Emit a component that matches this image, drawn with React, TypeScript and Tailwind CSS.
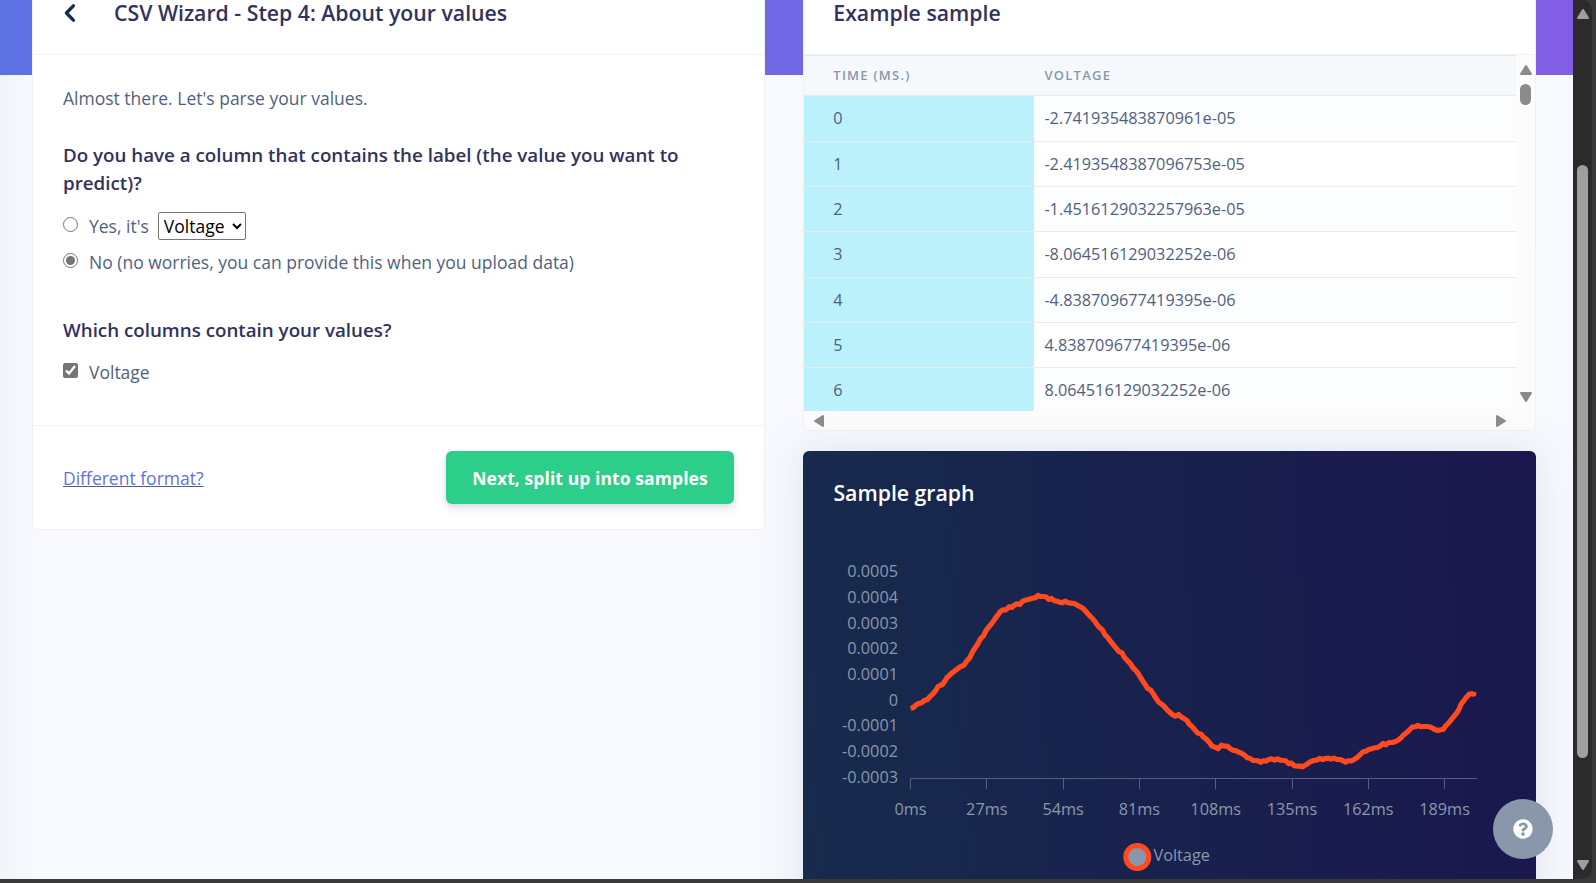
import { FaQuestionCircle } from "react-icons/fa";

const samples = [
  "-2.741935483870961e-05",
  "-2.4193548387096753e-05",
  "-1.4516129032257963e-05",
  "-8.064516129032252e-06",
  "-4.838709677419395e-06",
  "4.838709677419395e-06",
  "8.064516129032252e-06",
];

const yLabels: [string, number][] = [
  ["0.0005", 577],
  ["0.0004", 603],
  ["0.0003", 629],
  ["0.0002", 654],
  ["0.0001", 680],
  ["0", 706],
  ["-0.0001", 731],
  ["-0.0002", 757],
  ["-0.0003", 783],
];
const xLabels = ["0ms", "27ms", "54ms", "81ms", "108ms", "135ms", "162ms", "189ms"];

const linePoints =
  "274,506 282,503 292,494 299,491 307,489 315,482 324,479 332,470 341,462 349,452 356,440 362,437 368,435 375,426 383,413 392,405 400,398 409,391 418,384 427,379 434,376 441,365 451,354 459,337 467,324 475,313 483,297 493,287 500,272 509,260 518,250 526,238 535,226 543,215 551,210 558,211 564,206 569,201 577,203 584,197 592,192 602,194 609,185 618,181 626,179 634,177 641,175 648,174 655,167 662,170 671,170 680,171 688,179 696,176 704,182 712,184 720,187 729,189 738,184 746,189 755,190 765,191 774,197 783,201 791,206 800,216 809,226 819,236 826,244 833,255 841,264 849,270 856,284 865,293 873,304 882,315 890,325 898,335 908,339 915,353 924,362 933,372 941,384 951,394 959,405 968,420 977,434 985,446 993,450 1001,461 1009,474 1017,486 1026,493 1034,499 1043,510 1052,518 1060,525 1068,529 1078,524 1086,532 1095,537 1103,543 1111,555 1119,561 1127,571 1135,580 1145,583 1153,593 1162,599 1170,608 1178,619 1187,622 1196,627 1206,616 1215,619 1224,619 1232,626 1240,631 1250,633 1258,637 1267,641 1275,646 1284,654 1293,656 1301,662 1310,662 1318,664 1324,668 1331,663 1339,664 1347,660 1356,657 1366,661 1374,657 1383,661 1391,662 1399,663 1408,672 1416,670 1425,678 1433,679 1442,679 1450,681 1458,676 1466,671 1475,665 1483,662 1492,661 1501,656 1510,659 1518,656 1527,655 1535,658 1543,655 1552,659 1561,659 1570,662 1578,667 1586,663 1597,663 1605,659 1614,653 1622,645 1631,636 1640,634 1648,629 1657,627 1665,624 1674,623 1682,619 1691,611 1700,615 1709,608 1718,608 1727,606 1735,602 1744,595 1752,586 1761,579 1770,571 1778,562 1787,561 1796,557 1804,561 1812,560 1821,560 1830,561 1838,564 1846,569 1855,572 1864,570 1872,568 1880,557 1889,548 1897,538 1906,527 1914,517 1920,506 1925,493 1933,483 1942,471 1950,463 1958,462 1963,463 1964,456";

function Arrow({ className }: { className: string }) {
  return (
    <svg viewBox="0 0 12 10" className={className}>
      <path d="M6 1 L11 9 H1 Z" fill="currentColor" stroke="currentColor" strokeWidth="2" strokeLinejoin="round" />
    </svg>
  );
}

function WizardCard() {
  return (
    <section className="h-[530px] w-[733px] shrink-0 rounded-b-md border border-t-0 border-black/5 bg-white">
      <header className="flex h-[55px] items-start border-b border-black/5 pl-[31px]">
        <svg viewBox="0 0 12 20" className="mt-[3px] h-5 w-3" fill="none" stroke="#172b4d" strokeWidth="3.3" strokeLinecap="round" strokeLinejoin="round">
          <path d="M9.4 2.8 L2.4 10 L9.4 17.2" />
        </svg>
        <h1 className="ml-[38px] text-[21.25px] leading-[25.5px] font-semibold text-[#32325d]">
          CSV Wizard - Step 4: About your values
        </h1>
      </header>
      <div className="h-[371px] border-b border-black/5 pt-[28px] pr-[30px] pl-[30px] text-[17.5px] leading-[30px]">
        <p>Almost there. Let's parse your values.</p>
        <h2 className="mt-[28px] text-[18.75px] leading-[28.1px] font-semibold text-[#32325d]">
          Do you have a column that contains the label (the value you want to predict)?
        </h2>
        <div className="mt-[14px] flex h-[30px] items-center">
          <input type="radio" name="label" className="mb-[4px] size-[15px] accent-[#757575]" />
          <span className="ml-[11px]">Yes, it's</span>
          <select className="ml-[9px] h-[28px] w-[88px] rounded-[2px] border border-[#767676] bg-white pl-px leading-[26px] text-black">
            <option>Voltage</option>
          </select>
        </div>
        <div className="mt-[6px] flex h-[30px] items-center">
          <input type="radio" name="label" defaultChecked className="mb-[4px] size-[15px] accent-[#757575]" />
          <span className="ml-[11px]">No (no worries, you can provide this when you upload data)</span>
        </div>
        <h2 className="mt-[39px] text-[18.75px] leading-[28.1px] font-semibold text-[#32325d]">
          Which columns contain your values?
        </h2>
        <div className="mt-[13px] flex h-[30px] items-center">
          <input type="checkbox" defaultChecked className="mb-[3px] size-[15px] accent-[#757575]" />
          <span className="ml-[11px]">Voltage</span>
        </div>
      </div>
      <footer className="flex items-start justify-between px-[30px] pt-[25px]">
        <a className="mt-[12px] text-[17.5px] leading-[30px] text-[#5e72e4] underline decoration-[#525f7f]">Different format?</a>
        <button className="h-[53px] w-[288px] rounded-[6px] bg-[#2dce89] pt-[2px] text-[17.5px] font-bold tracking-[.005em] text-white shadow-[0_5px_8px_rgba(50,50,93,.11),0_1px_4px_rgba(0,0,0,.08)]">
          Next, split up into samples
        </button>
      </footer>
    </section>
  );
}

function SampleCard() {
  return (
    <section className="h-[431px] w-[733px] overflow-hidden rounded-b-md border border-t-0 border-black/5 bg-white">
      <header className="h-[55px] border-b border-black/5 pl-[29.3px] text-[21.25px] leading-[25.5px] font-semibold text-[#32325d]">
        Example sample
      </header>
      <div className="flex">
        <div className="h-[356px] w-[712px] overflow-hidden">
          <div className="flex h-[40.4px] border-t border-[#e9ecef] bg-[#f6f9fc] text-[13px] leading-[38px] font-semibold tracking-[1.25px] text-[#8898aa] uppercase">
            <div className="w-[230px] pl-[29.3px]">Time (ms.)</div>
            <div className="pl-[10.4px]">Voltage</div>
          </div>
          {samples.map((value, i) => (
            <div
              key={value}
              className="flex h-[45.34px] border-t border-[#e9ecef] text-[16.25px] leading-[44.5px] odd:bg-white even:bg-[#fcfdfe]"
            >
              <div className="w-[230px] bg-[#bbf1fb] pl-[29.3px]">{i}</div>
              <div className="pl-[10.4px]">{value}</div>
            </div>
          ))}
        </div>
        <div className="flex h-[356px] w-[19px] flex-col items-center bg-[#fcfcfc] pt-[10px] text-[#8b8b8b]">
          <Arrow className="h-[10px] w-3" />
          <div className="mt-[9px] h-[21px] w-[11px] rounded-full bg-[#8b8b8b]" />
          <Arrow className="mt-[287px] h-[10px] w-3 rotate-180" />
        </div>
      </div>
      <div className="flex h-[19px] items-center justify-between bg-[#fcfcfc] pr-[28px] pl-[9px] text-[#8b8b8b]">
        <Arrow className="h-[10px] w-3 -rotate-90" />
        <Arrow className="h-[10px] w-3 rotate-90" />
      </div>
    </section>
  );
}

function GraphCard() {
  return (
    <section className="relative mt-5 h-[500px] w-[733px] rounded-md bg-[linear-gradient(87deg,#172b4d,#1a174d)] shadow-[0_0_40px_rgba(136,152,170,.22)]">
      <h2 className="h-[89px] pt-[29px] pl-[30.4px] text-[21.25px] leading-[25.5px] font-semibold text-white">Sample graph</h2>
      <svg viewBox="820 540 716 343" className="ml-[17px] h-[343px] w-[716px] text-[16.25px]" fill="#8898aa">
        {yLabels.map(([label, y]) => (
          <text key={label} x="898" y={y} textAnchor="end">
            {label}
          </text>
        ))}
        <path
          d="M910 778.5H1477M910.5 778V789M986.5 778V789M1063.5 778V789M1139.5 778V789M1215.5 778V789M1292.5 778V789M1368.5 778V789M1444.5 778V789"
          fill="none"
          stroke="#525f7f"
        />
        {xLabels.map((label, i) => (
          <text key={label} x={910.5 + i * 76.3} y="815" textAnchor="middle">
            {label}
          </text>
        ))}
        <g transform="translate(819.4 539.8) scale(0.33333)">
          <polyline points={linePoints} fill="none" stroke="#ff4a20" strokeWidth="15.5" strokeLinejoin="round" />
        </g>
        <circle cx="1137.3" cy="857" r="11.5" stroke="#ff4a20" strokeWidth="5" />
        <text x="1153.5" y="861">Voltage</text>
      </svg>
    </section>
  );
}

export default function App() {
  return (
    <div className="h-[883px] w-[1596px] overflow-hidden bg-[#3a3939] font-['Open_Sans',sans-serif] text-[#525f7f]">
      <div className="flex h-[879px] w-[1592px] overflow-hidden rounded-r-[10px] bg-[#2b2b2b]">
        <main className="relative flex h-[879px] w-[1573px] items-start gap-[38px] overflow-hidden bg-[linear-gradient(87deg,#5e72e4,#825ee4)] bg-[length:100%_75px] bg-no-repeat pl-8">
          <div className="absolute inset-x-0 top-[75px] bottom-0 bg-[#f8f9fe]">
            <div className="h-full w-8 bg-[linear-gradient(90deg,#f3f4f9,#f8f9fe)]" />
          </div>
          <div className="relative">
            <WizardCard />
          </div>
          <div className="relative">
            <SampleCard />
            <GraphCard />
          </div>
          <button className="absolute top-[799px] left-[1493px] flex size-[60px] items-center justify-center rounded-full bg-[#8898aa] text-xl text-white">
            <FaQuestionCircle />
          </button>
        </main>
        <div className="flex w-[19px] flex-col items-center pt-[9px] text-[#9f9f9f]">
          <Arrow className="h-[10px] w-3" />
          <div className="mt-[146px] h-[593px] w-[11px] rounded-full bg-[#9f9f9f]" />
          <Arrow className="mt-[102px] h-[10px] w-3 rotate-180" />
        </div>
      </div>
    </div>
  );
}
